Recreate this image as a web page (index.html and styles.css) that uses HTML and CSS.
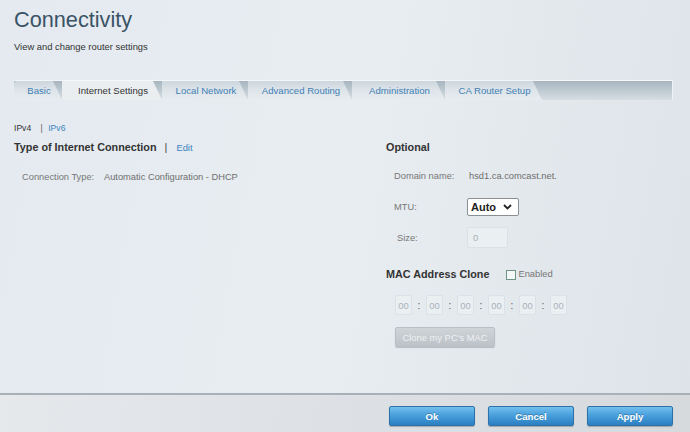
FILE: index.html
```html
<!DOCTYPE html>
<html lang="en">
<head>
    <meta charset="UTF-8">
    <title>Connectivity</title>
    <link rel="stylesheet" href="styles.css">
</head>
<body>
    <div class="page">
        <!-- Header -->
        <header class="page-head">
            <h1>Connectivity</h1>
            <p>View and change router settings</p>
        </header>

        <!-- Tabs -->
        <nav class="tabs">
            <a class="tab tab-basic">Basic</a>
            <a class="tab tab-internet active">Internet Settings</a>
            <a class="tab tab-local">Local Network</a>
            <a class="tab tab-routing">Advanced Routing</a>
            <a class="tab tab-admin">Administration</a>
            <a class="tab tab-ca">CA Router Setup</a>
        </nav>

        <!-- Settings -->
        <main class="content">
            <section class="col col-left">
                <div class="ip-switch">
                    <span class="ip-current">IPv4</span>
                    <span class="sep">|</span>
                    <a class="link">IPv6</a>
                </div>
                <h2 class="section-title">Type of Internet Connection <span class="sep">|</span> <a class="link edit">Edit</a></h2>
                <div class="row row-conn">
                    <span class="label label-conn">Connection Type:</span>
                    <span class="value">Automatic Configuration - DHCP</span>
                </div>
            </section>

            <section class="col col-right">
                <h2 class="section-title">Optional</h2>
                <div class="row row-domain">
                    <span class="label">Domain name:</span>
                    <span class="value">hsd1.ca.comcast.net.</span>
                </div>
                <div class="row row-mtu">
                    <span class="label">MTU:</span>
                    <div class="select">
                        <span>Auto</span>
                        <svg width="9" height="6" viewBox="0 0 9 6"><path d="M1 1 L4.5 4.5 L8 1" fill="none" stroke="#222" stroke-width="1.8"/></svg>
                    </div>
                </div>
                <div class="row row-size">
                    <span class="label label-size">Size:</span>
                    <div class="input input-size">0</div>
                </div>

                <h2 class="section-title mac-title">MAC Address Clone
                    <span class="check-wrap"><span class="checkbox"></span>Enabled</span>
                </h2>
                <div class="mac-fields">
                    <div class="input mac">00</div><span class="colon">:</span>
                    <div class="input mac">00</div><span class="colon">:</span>
                    <div class="input mac">00</div><span class="colon">:</span>
                    <div class="input mac">00</div><span class="colon">:</span>
                    <div class="input mac">00</div><span class="colon">:</span>
                    <div class="input mac">00</div>
                </div>
                <button class="btn-clone">Clone my PC's MAC</button>
            </section>
        </main>

        <!-- Footer buttons -->
        <footer class="page-foot">
            <button class="btn">Ok</button>
            <button class="btn">Cancel</button>
            <button class="btn">Apply</button>
        </footer>
    </div>
</body>
</html>
```

FILE: styles.css
```css
* {
    margin: 0;
    padding: 0;
    box-sizing: border-box;
}

body {
    font-family: "Liberation Sans", Arial, sans-serif;
    color: #333;
    background: #e6ebef;
    width: 690px;
    height: 432px;
    overflow: hidden;
}

.page {
    height: 432px;
    display: flex;
    flex-direction: column;
    background: linear-gradient(100deg, #e4eaf0 0%, #e8edf1 50%, #dde3e8 100%);
}

.page-head {
    padding: 7px 14px 0;
}

.page-head h1 {
    font-size: 21.7px;
    font-weight: normal;
    line-height: 26px;
    color: #3a5366;
    margin-bottom: 8px;
}

.page-head p {
    font-size: 9.4px;
    line-height: 12px;
    color: #333;
}

/* Tabs */
.tabs {
    margin: 27px 0 0 14px;
    width: 659px;
    height: 20px;
    display: flex;
    background: linear-gradient(to bottom, #a8b5be 0%, #c3ced5 60%, #d6dee3 100%);
    border-top: 1px solid #f4f7f9;
    border-right: 1px solid #f0f3f5;
}

.tab {
    height: 19px;
    line-height: 19px;
    font-size: 9.6px;
    color: #3f80b4;
    text-align: center;
    background: linear-gradient(to bottom, #ccd6dd 0%, #dde4e9 45%, #e7ecef 100%);
    clip-path: polygon(0 0, calc(100% - 9px) 0, 100% 100%, 0 100%);
    padding-left: 2px;
}

.tab.active {
    color: #333;
    background: #eaeef1;
}

.tab-basic { width: 48px; border-radius: 3px 0 0 0; }
.tab-internet { width: 100px; }
.tab-local { width: 86px; }
.tab-routing { width: 104px; }
.tab-admin { width: 93px; }
.tab-ca { width: 97px; }

/* Content */
.content {
    flex: 1;
    display: flex;
    padding-top: 22px;
    border-bottom: 2px solid #a9b1b8;
    box-shadow: 0 1px 0 #f7f9fa;
}

.col-left {
    width: 386px;
    padding-left: 14px;
}

.col-right {
    padding-top: 18px;
}

.ip-switch {
    font-size: 8.6px;
    line-height: 12px;
}

.ip-switch .sep {
    margin: 0 3px 0 7px;
    color: #666;
}

.link {
    color: #3a84bf;
}

.section-title {
    font-size: 10.8px;
    font-weight: bold;
    line-height: 14px;
    color: #333;
    margin-top: 6px;
}

.col-right .section-title {
    margin-top: 0;
}

.section-title .sep {
    font-weight: normal;
    margin: 0 6px 0 5px;
    color: #444;
}

.section-title .edit {
    font-weight: normal;
    font-size: 9.4px;
}

.row {
    display: flex;
    align-items: center;
    font-size: 9.3px;
    line-height: 12px;
    color: #777;
}

.label {
    width: 75px;
}

.row-conn {
    margin-top: 16px;
    padding-left: 8px;
}

.label-conn {
    width: 82px;
}

.row .value {
    color: #6e6e6e;
}

.row-domain {
    margin-top: 16px;
    padding-left: 8px;
}

.row-mtu {
    margin-top: 16px;
    padding-left: 8px;
    height: 18px;
}

.select {
    width: 52px;
    height: 18px;
    margin-left: -2px;
    background: #fff;
    border: 1px solid #8a8f94;
    border-radius: 2px;
    display: flex;
    align-items: center;
    justify-content: space-between;
    padding: 0 6px 0 3px;
    font-size: 11px;
    font-weight: bold;
    color: #222;
}

.select svg {
    display: block;
}

.row-size {
    margin-top: 11px;
    padding-left: 11px;
    height: 21px;
}

.label-size {
    width: 70px;
}

.input {
    background: #eaeff2;
    border: 1px solid #dbe1e6;
    border-radius: 2px;
    color: #a9b2ba;
    font-size: 9.4px;
    display: flex;
    align-items: center;
}

.input-size {
    width: 41px;
    height: 21px;
    padding-left: 5px;
}

.col-right .mac-title {
    margin-top: 19px;
    display: flex;
    align-items: center;
}

.check-wrap {
    display: flex;
    align-items: center;
    margin-left: 17px;
    font-size: 9.4px;
    font-weight: normal;
    color: #777;
}

.checkbox {
    width: 10px;
    height: 10px;
    border: 1px solid #6f9487;
    background: #f4f7f8;
    margin: 2px 2px 0 0;
}

.mac-fields {
    margin-top: 14px;
    padding-left: 9px;
    display: flex;
    align-items: center;
}

.mac {
    width: 17px;
    height: 20px;
    justify-content: center;
}

.colon {
    width: 14px;
    text-align: center;
    font-size: 10px;
    color: #555;
}

.btn-clone {
    margin: 12px 0 0 9px;
    width: 100px;
    height: 20px;
    border: 1px solid #b9bfc4;
    border-radius: 2px;
    background: linear-gradient(to bottom, #cfd4d8, #bcc3c8);
    box-shadow: 0 1px 1px rgba(0, 0, 0, 0.2);
    color: #eef1f3;
    font-family: "Liberation Sans", Arial, sans-serif;
    font-size: 9.4px;
}

/* Footer */
.page-foot {
    height: 37px;
    display: flex;
    justify-content: flex-end;
    gap: 13px;
    padding: 11px 17px 0 0;
    background: linear-gradient(100deg, #e5e9ec 0%, #dde1e5 50%, #d6dadd 100%);
}

.btn {
    width: 86px;
    height: 20px;
    border: 1px solid #2c72a8;
    border-radius: 2px;
    background: linear-gradient(to bottom, #73c0ee 0%, #4aa0dc 45%, #2b7fc2 100%);
    box-shadow: 0 1px 1px rgba(0, 0, 0, 0.25);
    color: #fff;
    font-family: "Liberation Sans", Arial, sans-serif;
    font-size: 9.6px;
    font-weight: bold;
    text-shadow: 0 -1px 0 rgba(0, 0, 0, 0.25);
}
```
